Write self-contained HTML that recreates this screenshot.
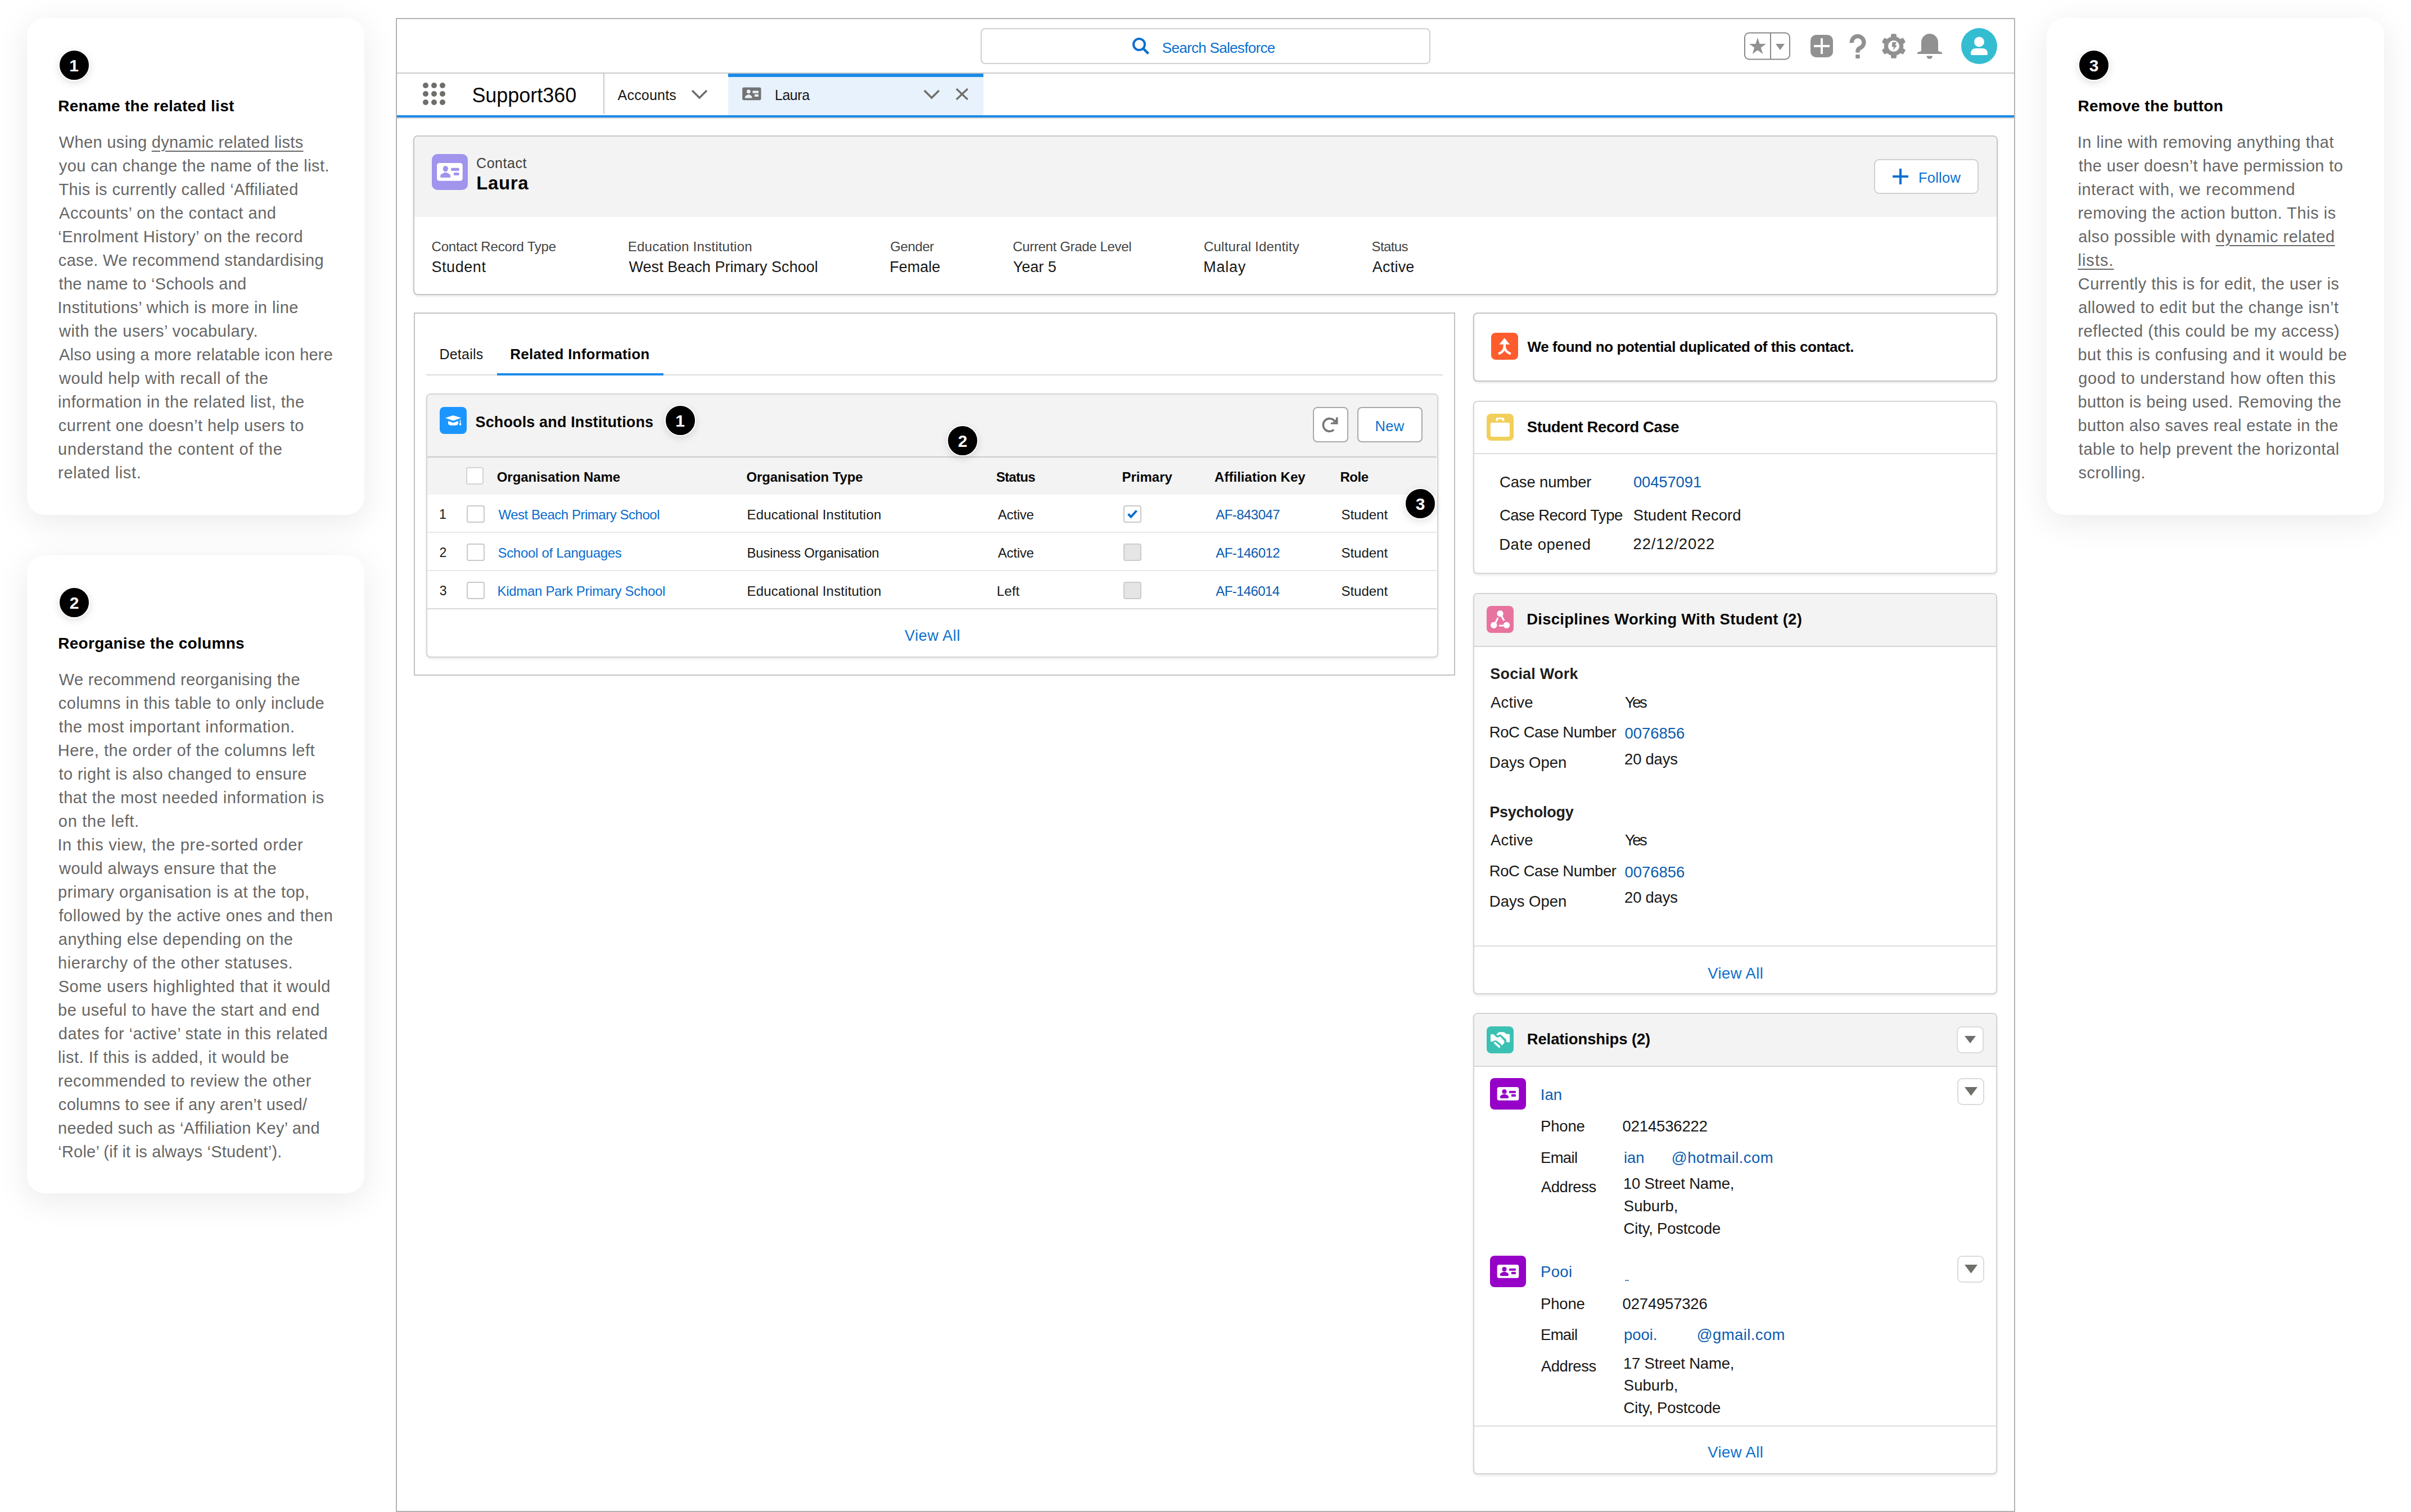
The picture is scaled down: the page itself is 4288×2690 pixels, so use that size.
<!DOCTYPE html><html><head><meta charset="utf-8"><style>
html,body{margin:0;padding:0;background:#ffffff;}
body{width:4288px;height:2690px;position:relative;overflow:hidden;font-family:"Liberation Sans",sans-serif;}
.a{position:absolute;box-sizing:border-box;}
.t{position:absolute;white-space:pre;}
.ul{text-decoration:underline;text-decoration-thickness:1.6px;text-underline-offset:5px;}
</style></head><body>
<div class="a" style="left:48.00px;top:32.00px;width:600.00px;height:884.00px;background:#fff;border-radius:32px;box-shadow:0 12px 60px rgba(0,0,0,0.085);"></div>
<div class="a" style="left:104.00px;top:88.00px;width:56.00px;height:56.00px;background:#000;border:2px solid #fff;border-radius:50%;box-shadow:0 4px 14px rgba(0,0,0,0.12);"></div>
<div class="t" style="left:123.15px;top:102.04px;font-size:30.00px;line-height:30.00px;color:#fff;font-weight:700;">1</div>
<div class="t" style="left:103.18px;top:175.46px;font-size:28.00px;line-height:28.00px;color:#000;font-weight:700;letter-spacing:0.3px;">Rename the related list</div>
<div class="t" style="left:104.86px;top:238.65px;font-size:29.00px;line-height:29.00px;color:#666666;letter-spacing:0.335px;">When using <span class="ul">dynamic related lists</span></div>
<div class="t" style="left:104.86px;top:280.65px;font-size:29.00px;line-height:29.00px;color:#666666;letter-spacing:0.422px;">you can change the name of the list.</div>
<div class="t" style="left:104.42px;top:322.65px;font-size:29.00px;line-height:29.00px;color:#666666;letter-spacing:0.394px;">This is currently called ‘Affiliated</div>
<div class="t" style="left:105.00px;top:364.65px;font-size:29.00px;line-height:29.00px;color:#666666;letter-spacing:0.542px;">Accounts’ on the contact and</div>
<div class="t" style="left:103.26px;top:406.65px;font-size:29.00px;line-height:29.00px;color:#666666;letter-spacing:0.441px;">‘Enrolment History’ on the record</div>
<div class="t" style="left:103.84px;top:448.65px;font-size:29.00px;line-height:29.00px;color:#666666;letter-spacing:0.314px;">case. We recommend standardising</div>
<div class="t" style="left:104.56px;top:490.65px;font-size:29.00px;line-height:29.00px;color:#666666;letter-spacing:0.276px;">the name to ‘Schools and</div>
<div class="t" style="left:102.39px;top:532.65px;font-size:29.00px;line-height:29.00px;color:#666666;letter-spacing:0.436px;">Institutions’ which is more in line</div>
<div class="t" style="left:105.00px;top:574.65px;font-size:29.00px;line-height:29.00px;color:#666666;letter-spacing:0.576px;">with the users’ vocabulary.</div>
<div class="t" style="left:105.00px;top:616.65px;font-size:29.00px;line-height:29.00px;color:#666666;letter-spacing:0.225px;">Also using a more relatable icon here</div>
<div class="t" style="left:105.00px;top:658.65px;font-size:29.00px;line-height:29.00px;color:#666666;letter-spacing:0.562px;">would help with recall of the</div>
<div class="t" style="left:103.11px;top:700.65px;font-size:29.00px;line-height:29.00px;color:#666666;letter-spacing:0.541px;">information in the related list, the</div>
<div class="t" style="left:103.84px;top:742.65px;font-size:29.00px;line-height:29.00px;color:#666666;letter-spacing:0.442px;">current one doesn’t help users to</div>
<div class="t" style="left:103.11px;top:784.65px;font-size:29.00px;line-height:29.00px;color:#666666;letter-spacing:0.768px;">understand the content of the</div>
<div class="t" style="left:103.11px;top:826.65px;font-size:29.00px;line-height:29.00px;color:#666666;letter-spacing:0.615px;">related list.</div>
<div class="a" style="left:48.00px;top:988.00px;width:600.00px;height:1135.00px;background:#fff;border-radius:32px;box-shadow:0 12px 60px rgba(0,0,0,0.085);"></div>
<div class="a" style="left:104.00px;top:1044.00px;width:56.00px;height:56.00px;background:#000;border:2px solid #fff;border-radius:50%;box-shadow:0 4px 14px rgba(0,0,0,0.12);"></div>
<div class="t" style="left:123.75px;top:1058.04px;font-size:30.00px;line-height:30.00px;color:#fff;font-weight:700;">2</div>
<div class="t" style="left:103.18px;top:1131.46px;font-size:28.00px;line-height:28.00px;color:#000;font-weight:700;letter-spacing:0.3px;">Reorganise the columns</div>
<div class="t" style="left:104.86px;top:1194.65px;font-size:29.00px;line-height:29.00px;color:#666666;letter-spacing:0.305px;">We recommend reorganising the</div>
<div class="t" style="left:103.84px;top:1236.65px;font-size:29.00px;line-height:29.00px;color:#666666;letter-spacing:0.461px;">columns in this table to only include</div>
<div class="t" style="left:104.56px;top:1278.65px;font-size:29.00px;line-height:29.00px;color:#666666;letter-spacing:0.661px;">the most important information.</div>
<div class="t" style="left:102.68px;top:1320.65px;font-size:29.00px;line-height:29.00px;color:#666666;letter-spacing:0.545px;">Here, the order of the columns left</div>
<div class="t" style="left:104.56px;top:1362.65px;font-size:29.00px;line-height:29.00px;color:#666666;letter-spacing:0.414px;">to right is also changed to ensure</div>
<div class="t" style="left:104.56px;top:1404.65px;font-size:29.00px;line-height:29.00px;color:#666666;letter-spacing:0.552px;">that the most needed information is</div>
<div class="t" style="left:103.84px;top:1446.65px;font-size:29.00px;line-height:29.00px;color:#666666;letter-spacing:0.717px;">on the left.</div>
<div class="t" style="left:102.39px;top:1488.65px;font-size:29.00px;line-height:29.00px;color:#666666;letter-spacing:0.670px;">In this view, the pre-sorted order</div>
<div class="t" style="left:105.00px;top:1530.65px;font-size:29.00px;line-height:29.00px;color:#666666;letter-spacing:0.465px;">would always ensure that the</div>
<div class="t" style="left:103.11px;top:1572.65px;font-size:29.00px;line-height:29.00px;color:#666666;letter-spacing:0.535px;">primary organisation is at the top,</div>
<div class="t" style="left:104.56px;top:1614.65px;font-size:29.00px;line-height:29.00px;color:#666666;letter-spacing:0.518px;">followed by the active ones and then</div>
<div class="t" style="left:103.84px;top:1656.65px;font-size:29.00px;line-height:29.00px;color:#666666;letter-spacing:0.482px;">anything else depending on the</div>
<div class="t" style="left:102.97px;top:1698.65px;font-size:29.00px;line-height:29.00px;color:#666666;letter-spacing:0.630px;">hierarchy of the other statuses.</div>
<div class="t" style="left:103.69px;top:1740.65px;font-size:29.00px;line-height:29.00px;color:#666666;letter-spacing:0.509px;">Some users highlighted that it would</div>
<div class="t" style="left:103.11px;top:1782.65px;font-size:29.00px;line-height:29.00px;color:#666666;letter-spacing:0.552px;">be useful to have the start and end</div>
<div class="t" style="left:103.84px;top:1824.65px;font-size:29.00px;line-height:29.00px;color:#666666;letter-spacing:0.485px;">dates for ‘active’ state in this related</div>
<div class="t" style="left:103.11px;top:1866.65px;font-size:29.00px;line-height:29.00px;color:#666666;letter-spacing:0.513px;">list. If this is added, it would be</div>
<div class="t" style="left:103.11px;top:1908.65px;font-size:29.00px;line-height:29.00px;color:#666666;letter-spacing:0.609px;">recommended to review the other</div>
<div class="t" style="left:103.84px;top:1950.65px;font-size:29.00px;line-height:29.00px;color:#666666;letter-spacing:0.308px;">columns to see if any aren’t used/</div>
<div class="t" style="left:103.11px;top:1992.65px;font-size:29.00px;line-height:29.00px;color:#666666;letter-spacing:0.263px;">needed such as ‘Affiliation Key’ and</div>
<div class="t" style="left:103.26px;top:2034.65px;font-size:29.00px;line-height:29.00px;color:#666666;letter-spacing:0.224px;">‘Role’ (if it is always ‘Student’).</div>
<div class="a" style="left:3640.00px;top:32.00px;width:600.00px;height:884.00px;background:#fff;border-radius:32px;box-shadow:0 12px 60px rgba(0,0,0,0.085);"></div>
<div class="a" style="left:3696.00px;top:88.00px;width:56.00px;height:56.00px;background:#000;border:2px solid #fff;border-radius:50%;box-shadow:0 4px 14px rgba(0,0,0,0.12);"></div>
<div class="t" style="left:3715.82px;top:102.04px;font-size:30.00px;line-height:30.00px;color:#fff;font-weight:700;">3</div>
<div class="t" style="left:3695.48px;top:175.46px;font-size:28.00px;line-height:28.00px;color:#000;font-weight:700;letter-spacing:0.3px;">Remove the button</div>
<div class="t" style="left:3694.69px;top:238.65px;font-size:29.00px;line-height:29.00px;color:#666666;letter-spacing:0.512px;">In line with removing anything that</div>
<div class="t" style="left:3696.87px;top:280.65px;font-size:29.00px;line-height:29.00px;color:#666666;letter-spacing:0.357px;">the user doesn’t have permission to</div>
<div class="t" style="left:3695.41px;top:322.65px;font-size:29.00px;line-height:29.00px;color:#666666;letter-spacing:0.656px;">interact with, we recommend</div>
<div class="t" style="left:3695.41px;top:364.65px;font-size:29.00px;line-height:29.00px;color:#666666;letter-spacing:0.521px;">removing the action button. This is</div>
<div class="t" style="left:3696.14px;top:406.65px;font-size:29.00px;line-height:29.00px;color:#666666;letter-spacing:0.484px;">also possible with <span class="ul">dynamic related</span></div>
<div class="t" style="left:3695.41px;top:448.65px;font-size:29.00px;line-height:29.00px;color:#666666;letter-spacing:1.028px;"><span class="ul">lists.</span></div>
<div class="t" style="left:3695.85px;top:490.65px;font-size:29.00px;line-height:29.00px;color:#666666;letter-spacing:0.469px;">Currently this is for edit, the user is</div>
<div class="t" style="left:3696.14px;top:532.65px;font-size:29.00px;line-height:29.00px;color:#666666;letter-spacing:0.513px;">allowed to edit but the change isn’t</div>
<div class="t" style="left:3695.41px;top:574.65px;font-size:29.00px;line-height:29.00px;color:#666666;letter-spacing:0.553px;">reflected (this could be my access)</div>
<div class="t" style="left:3695.41px;top:616.65px;font-size:29.00px;line-height:29.00px;color:#666666;letter-spacing:0.576px;">but this is confusing and it would be</div>
<div class="t" style="left:3696.14px;top:658.65px;font-size:29.00px;line-height:29.00px;color:#666666;letter-spacing:0.653px;">good to understand how often this</div>
<div class="t" style="left:3695.41px;top:700.65px;font-size:29.00px;line-height:29.00px;color:#666666;letter-spacing:0.416px;">button is being used. Removing the</div>
<div class="t" style="left:3695.41px;top:742.65px;font-size:29.00px;line-height:29.00px;color:#666666;letter-spacing:0.423px;">button also saves real estate in the</div>
<div class="t" style="left:3696.87px;top:784.65px;font-size:29.00px;line-height:29.00px;color:#666666;letter-spacing:0.527px;">table to help prevent the horizontal</div>
<div class="t" style="left:3696.43px;top:826.65px;font-size:29.00px;line-height:29.00px;color:#666666;letter-spacing:0.531px;">scrolling.</div>
<div class="a" style="left:704.00px;top:32.00px;width:2880.00px;height:2658.00px;border:2px solid #b3b3b3;background:#fff;"></div>
<div class="a" style="left:706.00px;top:129.00px;width:2876.00px;height:2.00px;background:#c8c8c8;"></div>
<div class="a" style="left:1744.00px;top:50.00px;width:800.00px;height:64.00px;border:2px solid #d0d0d0;border-radius:8px;background:#fff;"></div>
<svg class="a" style="left:2012.00px;top:65.00px" width="34" height="34" viewBox="0 0 34 34"><circle cx="14" cy="14" r="10" fill="none" stroke="#0b6fce" stroke-width="4"/><line x1="21.5" y1="21.5" x2="30.5" y2="30.5" stroke="#0b6fce" stroke-width="4.5" stroke-linecap="butt"/></svg>
<div class="t" style="left:2066.83px;top:71.59px;font-size:26.00px;line-height:26.00px;color:#0b6fce;letter-spacing:-0.693px;">Search Salesforce</div>
<svg class="a" style="left:3101.00px;top:57.00px" width="84" height="50" viewBox="0 0 84 50"><rect x="2" y="1.5" width="80" height="47" rx="8" fill="#fff" stroke="#888" stroke-width="2"/><line x1="48" y1="1.5" x2="48" y2="48.5" stroke="#888" stroke-width="2"/><polygon points="25,10 28.6,21 40,21 30.8,27.8 34.3,39 25,32.2 15.7,39 19.2,27.8 10,21 21.4,21" fill="#919191"/><polygon points="57,21 73,21 65,32" fill="#919191"/></svg>
<svg class="a" style="left:3220.00px;top:62.00px" width="40" height="40" viewBox="0 0 40 40"><rect x="0" y="0" width="40" height="40" rx="10" fill="#919191"/><rect x="18" y="6" width="4" height="28" fill="#fff"/><rect x="6" y="18" width="28" height="4" fill="#fff"/></svg>
<svg class="a" style="left:3286.00px;top:58.00px" width="36" height="48" viewBox="0 0 36 48"><path d="M7.3 18.2 A10.8 10.8 0 1 1 22.2 27.3 Q18 29.3 18 33 L18 35.5" fill="none" stroke="#919191" stroke-width="7.4"/><rect x="14.2" y="39" width="7.6" height="7" rx="1" fill="#919191"/></svg>
<svg class="a" style="left:3346.00px;top:60.00px" width="44" height="44" viewBox="0 0 44 44"><polygon points="14.10,8.32 18.18,6.67 18.78,1.65 25.22,1.65 25.82,6.67 29.90,8.32 33.37,11.02 38.01,9.04 41.23,14.62 37.19,17.64 37.80,22.00 37.19,26.36 41.23,29.38 38.01,34.96 33.37,32.98 29.90,35.68 25.82,37.33 25.22,42.35 18.78,42.35 18.18,37.33 14.10,35.68 10.63,32.98 5.99,34.96 2.77,29.38 6.81,26.36 6.20,22.00 6.81,17.64 2.77,14.62 5.99,9.04 10.63,11.02" fill="#919191" stroke="#919191" stroke-width="3" stroke-linejoin="round"/><circle cx="22" cy="22" r="10" fill="#fff"/><polygon points="19.5,15 27,15 24.5,20.5 28,20.5 20.5,30 22.5,23.5 18.5,23.5" fill="#919191"/></svg>
<svg class="a" style="left:3409.00px;top:59.70px" width="46" height="46" viewBox="0 0 46 46"><path d="M8 29 L8 15 A15 15 0 0 1 38 15 L38 29 Q38 32 41 32 Q45 32 45 35 L45 36 L1 36 L1 35 Q1 32 5 32 Q8 32 8 29 Z" fill="#919191"/><path d="M17.5 39.5 L28 39.5 A5.25 5.25 0 0 1 17.5 39.5 Z" fill="#919191"/></svg>
<svg class="a" style="left:3488.00px;top:50.00px" width="64" height="64" viewBox="0 0 64 64"><circle cx="32" cy="32" r="32" fill="#34bdd0"/><circle cx="32" cy="24.5" r="9" fill="#fff"/><path d="M17 46 Q17 36 26 36 L38 36 Q47 36 47 46 Q47 48 45 48 L19 48 Q17 48 17 46 Z" fill="#fff"/></svg>
<div class="a" style="left:752.00px;top:147.00px;width:10.00px;height:10.00px;background:#706e6b;border-radius:50%;"></div>
<div class="a" style="left:767.00px;top:147.00px;width:10.00px;height:10.00px;background:#706e6b;border-radius:50%;"></div>
<div class="a" style="left:782.00px;top:147.00px;width:10.00px;height:10.00px;background:#706e6b;border-radius:50%;"></div>
<div class="a" style="left:752.00px;top:162.00px;width:10.00px;height:10.00px;background:#706e6b;border-radius:50%;"></div>
<div class="a" style="left:767.00px;top:162.00px;width:10.00px;height:10.00px;background:#706e6b;border-radius:50%;"></div>
<div class="a" style="left:782.00px;top:162.00px;width:10.00px;height:10.00px;background:#706e6b;border-radius:50%;"></div>
<div class="a" style="left:752.00px;top:177.00px;width:10.00px;height:10.00px;background:#706e6b;border-radius:50%;"></div>
<div class="a" style="left:767.00px;top:177.00px;width:10.00px;height:10.00px;background:#706e6b;border-radius:50%;"></div>
<div class="a" style="left:782.00px;top:177.00px;width:10.00px;height:10.00px;background:#706e6b;border-radius:50%;"></div>
<div class="t" style="left:839.38px;top:152.47px;font-size:36.00px;line-height:36.00px;color:#080707;letter-spacing:-0.027px;">Support360</div>
<div class="a" style="left:1073.00px;top:131.00px;width:2.00px;height:72.00px;background:#c9c9c9;"></div>
<div class="t" style="left:1098.60px;top:156.90px;font-size:25.00px;line-height:25.00px;color:#181818;letter-spacing:0.200px;">Accounts</div>
<svg class="a" style="left:1228.00px;top:157.00px" width="32" height="22" viewBox="0 0 32 22"><polyline points="3,4 16,17 29,4" fill="none" stroke="#706e6b" stroke-width="3.5"/></svg>
<div class="a" style="left:1295.00px;top:131.00px;width:454.00px;height:74.00px;background:#e8f2fc;"></div>
<div class="a" style="left:1295.00px;top:131.00px;width:454.00px;height:6.00px;background:#1b8ae8;"></div>
<svg class="a" style="left:1320.00px;top:154.50px" width="34" height="24" viewBox="0 0 34 24"><rect x="0.2" y="0.4" width="33.4" height="22.9" rx="3" fill="#737373"/><circle cx="11.4" cy="7.8" r="3.4" fill="#e8f2fc"/><path d="M4.7 19.5 Q4.7 15.5 8.5 14.3 L10 13.3 L12.8 13.3 L14.3 14.3 Q17.8 15.5 17.8 19.5 Z" fill="#e8f2fc"/><rect x="18.5" y="6.4" width="10.6" height="4.4" rx="0.8" fill="#e8f2fc"/><rect x="21.9" y="12.8" width="7.2" height="4.3" rx="0.8" fill="#e8f2fc"/></svg>
<div class="t" style="left:1378.00px;top:156.70px;font-size:25.00px;line-height:25.00px;color:#181818;letter-spacing:-0.469px;">Laura</div>
<svg class="a" style="left:1641.00px;top:157.00px" width="32" height="22" viewBox="0 0 32 22"><polyline points="3,4 16,17 29,4" fill="none" stroke="#706e6b" stroke-width="3.5"/></svg>
<svg class="a" style="left:1698.00px;top:155.00px" width="26" height="25" viewBox="0 0 26 25"><line x1="3" y1="3" x2="23" y2="22" stroke="#706e6b" stroke-width="3.2"/><line x1="23" y1="3" x2="3" y2="22" stroke="#706e6b" stroke-width="3.2"/></svg>
<div class="a" style="left:706.00px;top:205.00px;width:2876.00px;height:4.00px;background:#1b8ae8;"></div>
<div class="a" style="left:706.00px;top:209.00px;width:2876.00px;height:2.00px;background:#d5d5d5;"></div>
<div class="a" style="left:735.00px;top:241.00px;width:2818.00px;height:284.00px;border:2px solid #c6c6c6;border-radius:8px;background:#fff;box-shadow:0 2px 4px rgba(0,0,0,0.10);"></div>
<div class="a" style="left:737.00px;top:243.00px;width:2814.00px;height:143.00px;background:#f3f3f3;border-radius:6px 6px 0 0;"></div>
<svg class="a" style="left:768.00px;top:274.00px" width="64" height="64" viewBox="0 0 64 64"><rect width="64" height="64" rx="10" fill="#a094ed"/><rect x="9.1" y="16" width="45.7" height="31.7" rx="4.3" fill="#fff"/><ellipse cx="24.3" cy="26.2" rx="4.6" ry="5.2" fill="#a094ed"/><path d="M15 40 Q15 35.8 20 34.3 L22.3 33 L26.3 33 L28.6 34.3 Q33.4 35.8 33.4 40 Q33.4 42 31.4 42 L17 42 Q15 42 15 40 Z" fill="#a094ed"/><rect x="34.1" y="24.8" width="14.5" height="5.2" rx="1.5" fill="#a094ed"/><rect x="38.9" y="32.9" width="9.7" height="5.2" rx="1.5" fill="#a094ed"/></svg>
<div class="t" style="left:847.05px;top:277.90px;font-size:25.00px;line-height:25.00px;color:#3e3e3c;letter-spacing:0.542px;">Contact</div>
<div class="t" style="left:847.15px;top:309.20px;font-size:33.00px;line-height:33.00px;color:#080707;font-weight:700;letter-spacing:0.639px;">Laura</div>
<div class="a" style="left:3333.00px;top:283.00px;width:186.00px;height:62.00px;border:2px solid #d0d0d0;border-radius:9px;background:#fff;"></div>
<svg class="a" style="left:3366.00px;top:300.00px" width="28" height="28" viewBox="0 0 28 28"><rect x="12" y="0" width="4" height="28" fill="#0b6fce"/><rect x="0" y="12" width="28" height="4" fill="#0b6fce"/></svg>
<div class="t" style="left:3411.96px;top:303.59px;font-size:25.50px;line-height:25.50px;color:#0b6fce;letter-spacing:0.244px;">Follow</div>
<div class="t" style="left:767.50px;top:427.01px;font-size:24.00px;line-height:24.00px;color:#444444;letter-spacing:-0.190px;">Contact Record Type</div>
<div class="t" style="left:767.49px;top:462.38px;font-size:27.00px;line-height:27.00px;color:#181818;letter-spacing:0.556px;">Student</div>
<div class="t" style="left:1116.78px;top:427.01px;font-size:24.00px;line-height:24.00px;color:#444444;letter-spacing:0.233px;">Education Institution</div>
<div class="t" style="left:1118.57px;top:462.38px;font-size:27.00px;line-height:27.00px;color:#181818;letter-spacing:0.024px;">West Beach Primary School</div>
<div class="t" style="left:1583.20px;top:427.01px;font-size:24.00px;line-height:24.00px;color:#444444;letter-spacing:-0.376px;">Gender</div>
<div class="t" style="left:1582.24px;top:462.38px;font-size:27.00px;line-height:27.00px;color:#181818;letter-spacing:-0.014px;">Female</div>
<div class="t" style="left:1801.30px;top:427.01px;font-size:24.00px;line-height:24.00px;color:#444444;letter-spacing:-0.343px;">Current Grade Level</div>
<div class="t" style="left:1801.83px;top:462.38px;font-size:27.00px;line-height:27.00px;color:#181818;letter-spacing:-0.026px;">Year 5</div>
<div class="t" style="left:2141.10px;top:427.01px;font-size:24.00px;line-height:24.00px;color:#444444;letter-spacing:0.175px;">Cultural Identity</div>
<div class="t" style="left:2140.14px;top:462.38px;font-size:27.00px;line-height:27.00px;color:#181818;letter-spacing:0.767px;">Malay</div>
<div class="t" style="left:2439.62px;top:427.01px;font-size:24.00px;line-height:24.00px;color:#444444;letter-spacing:-0.624px;">Status</div>
<div class="t" style="left:2440.70px;top:462.38px;font-size:27.00px;line-height:27.00px;color:#181818;letter-spacing:0.235px;">Active</div>
<div class="a" style="left:736.00px;top:556.00px;width:1852.00px;height:646.00px;border:2px solid #c4c3c0;background:#fff;"></div>
<div class="t" style="left:781.40px;top:618.00px;font-size:25.00px;line-height:25.00px;color:#181818;letter-spacing:0.250px;">Details</div>
<div class="t" style="left:907.31px;top:617.19px;font-size:26.00px;line-height:26.00px;color:#080707;font-weight:700;letter-spacing:0.212px;">Related Information</div>
<div class="a" style="left:758.00px;top:666.00px;width:1808.00px;height:2.00px;background:#dcdcdc;"></div>
<div class="a" style="left:883.70px;top:664.00px;width:296.30px;height:4.00px;background:#1b8ae8;"></div>
<div class="a" style="left:758.00px;top:700.00px;width:1799.50px;height:470.00px;border:2px solid #d6d4d2;border-radius:8px;background:#fff;box-shadow:0 2px 4px rgba(0,0,0,0.10);"></div>
<div class="a" style="left:760.00px;top:702.00px;width:1795.50px;height:110.00px;background:#f3f3f3;border-radius:6px 6px 0 0;"></div>
<div class="a" style="left:760.00px;top:812.00px;width:1795.00px;height:2.00px;background:#c9c9c9;"></div>
<div class="a" style="left:760.00px;top:814.00px;width:1795.00px;height:66.00px;background:#f3f3f3;"></div>
<svg class="a" style="left:782.00px;top:724.00px" width="48" height="48" viewBox="0 0 48 48"><rect width="48" height="48" rx="8" fill="#1b96ff"/><polygon points="9.8,19.6 24.1,15 38.3,19.6 24.1,24.4" fill="#fff"/><path d="M15 25 L24.1 28.3 L32.9 25 L32.9 29.5 Q32.9 33.1 24.1 33.1 Q15 33.1 15 29.5 Z" fill="#fff"/><rect x="35.9" y="23" width="1.4" height="6" fill="#fff"/><ellipse cx="36.6" cy="30.8" rx="1.8" ry="2.2" fill="#fff"/></svg>
<div class="t" style="left:845.49px;top:738.28px;font-size:27.00px;line-height:27.00px;color:#080707;font-weight:700;letter-spacing:0.136px;">Schools and Institutions</div>
<div class="a" style="left:2334.50px;top:724.40px;width:63.00px;height:62.60px;border:2px solid #a8a8a8;border-radius:8px;background:#fff;"></div>
<svg class="a" style="left:2340.00px;top:730.00px" width="52" height="52" viewBox="0 0 52 52"><path d="M33.4 18.6 A11.4 11.4 0 1 0 32.2 34.7" fill="none" stroke="#757575" stroke-width="3.6"/><polygon points="36,12.4 39.5,12.4 39.5,24.8 26.8,24.8 26.8,21.7 36,21.7" fill="#757575"/><polygon points="36,16 36,21.7 30,21.7" fill="#757575"/></svg>
<div class="a" style="left:2414.00px;top:724.40px;width:115.50px;height:62.60px;border:2px solid #a8a8a8;border-radius:8px;background:#fff;"></div>
<div class="t" style="left:2445.56px;top:745.99px;font-size:25.50px;line-height:25.50px;color:#0b6fce;letter-spacing:0.256px;">New</div>
<div class="a" style="left:829.00px;top:831.00px;width:31.00px;height:31.00px;border:2px solid #d4d4d4;border-radius:4px;background:#fff;"></div>
<div class="t" style="left:883.74px;top:836.51px;font-size:24.00px;line-height:24.00px;color:#080707;font-weight:700;letter-spacing:-0.036px;">Organisation Name</div>
<div class="t" style="left:1327.54px;top:836.51px;font-size:24.00px;line-height:24.00px;color:#080707;font-weight:700;letter-spacing:-0.120px;">Organisation Type</div>
<div class="t" style="left:1771.68px;top:836.51px;font-size:24.00px;line-height:24.00px;color:#080707;font-weight:700;letter-spacing:-0.688px;">Status</div>
<div class="t" style="left:1995.44px;top:836.51px;font-size:24.00px;line-height:24.00px;color:#080707;font-weight:700;letter-spacing:0.013px;">Primary</div>
<div class="t" style="left:2160.10px;top:836.51px;font-size:24.00px;line-height:24.00px;color:#080707;font-weight:700;letter-spacing:0.017px;">Affiliation Key</div>
<div class="t" style="left:2383.44px;top:836.51px;font-size:24.00px;line-height:24.00px;color:#080707;font-weight:700;letter-spacing:-0.453px;">Role</div>
<div class="t" style="left:780.88px;top:903.52px;font-size:23.00px;line-height:23.00px;color:#181818;">1</div>
<div class="a" style="left:830.00px;top:898.50px;width:32.00px;height:31.50px;border:2px solid #c9c9c9;border-radius:4px;background:#fff;"></div>
<div class="t" style="left:886.38px;top:904.21px;font-size:24.00px;line-height:24.00px;color:#0a6ccf;letter-spacing:-0.464px;">West Beach Primary School</div>
<div class="t" style="left:1328.58px;top:904.21px;font-size:24.00px;line-height:24.00px;color:#181818;letter-spacing:0.175px;">Educational Institution</div>
<div class="t" style="left:1774.70px;top:904.21px;font-size:24.00px;line-height:24.00px;color:#181818;letter-spacing:-0.240px;">Active</div>
<div class="a" style="left:1998.00px;top:898.50px;width:32.00px;height:31.50px;border:2px solid #c9c9c9;border-radius:4px;background:#fff;"></div>
<svg class="a" style="left:2004.00px;top:905.00px" width="20" height="18" viewBox="0 0 20 18"><polyline points="2.5,9.5 7.5,14.5 17.5,3.5" fill="none" stroke="#0b6fce" stroke-width="4"/></svg>
<div class="t" style="left:2162.30px;top:904.21px;font-size:24.00px;line-height:24.00px;color:#0b5cb0;letter-spacing:-0.560px;">AF-843047</div>
<div class="t" style="left:2385.42px;top:904.21px;font-size:24.00px;line-height:24.00px;color:#181818;letter-spacing:-0.013px;">Student</div>
<div class="a" style="left:760.00px;top:946.00px;width:1795.00px;height:2.00px;background:#e8e8e8;"></div>
<div class="t" style="left:781.45px;top:971.52px;font-size:23.00px;line-height:23.00px;color:#181818;">2</div>
<div class="a" style="left:830.00px;top:966.50px;width:32.00px;height:31.50px;border:2px solid #c9c9c9;border-radius:4px;background:#fff;"></div>
<div class="t" style="left:885.42px;top:972.21px;font-size:24.00px;line-height:24.00px;color:#0a6ccf;letter-spacing:-0.281px;">School of Languages</div>
<div class="t" style="left:1328.58px;top:972.21px;font-size:24.00px;line-height:24.00px;color:#181818;letter-spacing:-0.257px;">Business Organisation</div>
<div class="t" style="left:1774.70px;top:972.21px;font-size:24.00px;line-height:24.00px;color:#181818;letter-spacing:-0.240px;">Active</div>
<div class="a" style="left:1998.00px;top:966.50px;width:32.00px;height:31.50px;border:2px solid #cccccc;border-radius:4px;background:#e5e5e5;"></div>
<div class="t" style="left:2162.30px;top:972.21px;font-size:24.00px;line-height:24.00px;color:#0b5cb0;letter-spacing:-0.560px;">AF-146012</div>
<div class="t" style="left:2385.42px;top:972.21px;font-size:24.00px;line-height:24.00px;color:#181818;letter-spacing:-0.013px;">Student</div>
<div class="a" style="left:760.00px;top:1014.00px;width:1795.00px;height:2.00px;background:#e8e8e8;"></div>
<div class="t" style="left:781.68px;top:1039.52px;font-size:23.00px;line-height:23.00px;color:#181818;">3</div>
<div class="a" style="left:830.00px;top:1034.50px;width:32.00px;height:31.50px;border:2px solid #c9c9c9;border-radius:4px;background:#fff;"></div>
<div class="t" style="left:884.58px;top:1040.21px;font-size:24.00px;line-height:24.00px;color:#0a6ccf;letter-spacing:-0.318px;">Kidman Park Primary School</div>
<div class="t" style="left:1328.58px;top:1040.21px;font-size:24.00px;line-height:24.00px;color:#181818;letter-spacing:0.175px;">Educational Institution</div>
<div class="t" style="left:1772.78px;top:1040.21px;font-size:24.00px;line-height:24.00px;color:#181818;letter-spacing:0.127px;">Left</div>
<div class="a" style="left:1998.00px;top:1034.50px;width:32.00px;height:31.50px;border:2px solid #cccccc;border-radius:4px;background:#e5e5e5;"></div>
<div class="t" style="left:2162.30px;top:1040.21px;font-size:24.00px;line-height:24.00px;color:#0b5cb0;letter-spacing:-0.620px;">AF-146014</div>
<div class="t" style="left:2385.42px;top:1040.21px;font-size:24.00px;line-height:24.00px;color:#181818;letter-spacing:-0.013px;">Student</div>
<div class="a" style="left:760.00px;top:1082.00px;width:1795.00px;height:2.00px;background:#d8d8d8;"></div>
<div class="t" style="left:1609.07px;top:1117.78px;font-size:27.00px;line-height:27.00px;color:#0b6fce;letter-spacing:0.619px;">View All</div>
<div class="a" style="left:1182.00px;top:720.00px;width:56.00px;height:56.00px;background:#000;border:2px solid #fff;border-radius:50%;box-shadow:0 4px 14px rgba(0,0,0,0.12);"></div>
<div class="t" style="left:1201.15px;top:734.04px;font-size:30.00px;line-height:30.00px;color:#fff;font-weight:700;">1</div>
<div class="a" style="left:1684.00px;top:756.00px;width:56.00px;height:56.00px;background:#000;border:2px solid #fff;border-radius:50%;box-shadow:0 4px 14px rgba(0,0,0,0.12);"></div>
<div class="t" style="left:1703.75px;top:770.04px;font-size:30.00px;line-height:30.00px;color:#fff;font-weight:700;">2</div>
<div class="a" style="left:2498.00px;top:868.00px;width:56.00px;height:56.00px;background:#000;border:2px solid #fff;border-radius:50%;box-shadow:0 4px 14px rgba(0,0,0,0.12);"></div>
<div class="t" style="left:2517.82px;top:882.04px;font-size:30.00px;line-height:30.00px;color:#fff;font-weight:700;">3</div>
<div class="a" style="left:2620.00px;top:556.00px;width:932.00px;height:123.00px;border:2px solid #c4c4c4;border-radius:8px;background:#fff;box-shadow:0 2px 4px rgba(0,0,0,0.10);"></div>
<svg class="a" style="left:2652.00px;top:592.00px" width="48" height="48" viewBox="0 0 48 48"><rect width="48" height="48" rx="8" fill="#fe5c2d"/><polygon points="23.7,9.3 33.1,20.7 14.4,20.7" fill="#fff"/><path d="M23.8 20 L23.8 23 C23.8 30 20.5 34.5 14.6 36.8 M23.8 23 C23.8 30 27.1 34.5 33.3 36.8" fill="none" stroke="#fff" stroke-width="4.2" stroke-linecap="round"/></svg>
<div class="t" style="left:2716.60px;top:604.39px;font-size:26.00px;line-height:26.00px;color:#080707;font-weight:700;letter-spacing:-0.435px;">We found no potential duplicated of this contact.</div>
<div class="a" style="left:2620.00px;top:712.50px;width:932.00px;height:308.50px;border:2px solid #d6d6d6;border-radius:8px;background:#fff;box-shadow:0 2px 4px rgba(0,0,0,0.10);"></div>
<svg class="a" style="left:2644.00px;top:736.00px" width="48" height="48" viewBox="0 0 48 48"><rect width="48" height="48" rx="8" fill="#f2cf5b"/><rect x="6.9" y="16.1" width="34.1" height="25" rx="3" fill="#fff"/><path d="M16.5 12.9 L16.5 9.5 Q16.5 6.9 19 6.9 L28.8 6.9 Q31.3 6.9 31.3 9.5 L31.3 12.9 L28 12.9 L28 10.1 L20 10.1 L20 12.9 Z" fill="#fff"/></svg>
<div class="t" style="left:2715.78px;top:746.17px;font-size:27.50px;line-height:27.50px;color:#080707;font-weight:700;letter-spacing:-0.402px;">Student Record Case</div>
<div class="a" style="left:2622.00px;top:806.00px;width:928.00px;height:2.00px;background:#dddddd;"></div>
<div class="t" style="left:2667.03px;top:843.97px;font-size:27.50px;line-height:27.50px;color:#181818;letter-spacing:-0.161px;">Case number</div>
<div class="t" style="left:2904.90px;top:843.97px;font-size:27.50px;line-height:27.50px;color:#0b5cb0;letter-spacing:-0.148px;">00457091</div>
<div class="t" style="left:2667.03px;top:902.67px;font-size:27.50px;line-height:27.50px;color:#181818;letter-spacing:-0.538px;">Case Record Type</div>
<div class="t" style="left:2904.76px;top:902.67px;font-size:27.50px;line-height:27.50px;color:#181818;letter-spacing:0.054px;">Student Record</div>
<div class="t" style="left:2666.20px;top:955.27px;font-size:27.50px;line-height:27.50px;color:#181818;letter-spacing:0.545px;">Date opened</div>
<div class="t" style="left:2904.62px;top:953.97px;font-size:27.50px;line-height:27.50px;color:#181818;letter-spacing:0.790px;">22/12/2022</div>
<div class="a" style="left:2620.00px;top:1054.50px;width:932.00px;height:714.50px;border:2px solid #d6d4d2;border-radius:8px;background:#fff;box-shadow:0 2px 4px rgba(0,0,0,0.10);"></div>
<div class="a" style="left:2622.00px;top:1056.50px;width:928.00px;height:92.00px;background:#f3f3f3;border-radius:6px 6px 0 0;"></div>
<div class="a" style="left:2622.00px;top:1148.50px;width:928.00px;height:2.00px;background:#d6d6d6;"></div>
<svg class="a" style="left:2644.00px;top:1078.00px" width="48" height="48" viewBox="0 0 48 48"><rect width="48" height="48" rx="8" fill="#e8739e"/><circle cx="24.1" cy="13.7" r="5.7" fill="#fff"/><circle cx="12.8" cy="34.2" r="5.7" fill="#fff"/><circle cx="35.5" cy="34.2" r="5.7" fill="#fff"/><line x1="26.3" y1="17.5" x2="31.2" y2="26.3" stroke="#fff" stroke-width="3"/><line x1="20.2" y1="21" x2="15.8" y2="30" stroke="#fff" stroke-width="3"/><line x1="22" y1="35.1" x2="30" y2="35.1" stroke="#fff" stroke-width="3"/></svg>
<div class="t" style="left:2715.21px;top:1088.17px;font-size:27.50px;line-height:27.50px;color:#080707;font-weight:700;letter-spacing:0.260px;">Disciplines Working With Student (2)</div>
<div class="t" style="left:2650.19px;top:1186.28px;font-size:27.00px;line-height:27.00px;color:#1e1e1e;font-weight:700;letter-spacing:0.228px;">Social Work</div>
<div class="t" style="left:2651.00px;top:1235.67px;font-size:27.50px;line-height:27.50px;color:#181818;letter-spacing:0.147px;">Active</div>
<div class="t" style="left:2889.81px;top:1235.67px;font-size:27.50px;line-height:27.50px;color:#181818;letter-spacing:-2.487px;">Yes</div>
<div class="t" style="left:2648.80px;top:1289.47px;font-size:27.50px;line-height:27.50px;color:#181818;letter-spacing:-0.438px;">RoC Case Number</div>
<div class="t" style="left:2889.40px;top:1290.97px;font-size:27.50px;line-height:27.50px;color:#0b5cb0;letter-spacing:-0.046px;">0076856</div>
<div class="t" style="left:2648.80px;top:1343.47px;font-size:27.50px;line-height:27.50px;color:#181818;">Days Open</div>
<div class="t" style="left:2889.12px;top:1337.17px;font-size:27.50px;line-height:27.50px;color:#181818;letter-spacing:-0.258px;">20 days</div>
<div class="t" style="left:2649.24px;top:1432.48px;font-size:27.00px;line-height:27.00px;color:#1e1e1e;font-weight:700;letter-spacing:-0.231px;">Psychology</div>
<div class="t" style="left:2651.00px;top:1481.17px;font-size:27.50px;line-height:27.50px;color:#181818;letter-spacing:0.147px;">Active</div>
<div class="t" style="left:2889.81px;top:1481.17px;font-size:27.50px;line-height:27.50px;color:#181818;letter-spacing:-2.487px;">Yes</div>
<div class="t" style="left:2648.80px;top:1536.27px;font-size:27.50px;line-height:27.50px;color:#181818;letter-spacing:-0.438px;">RoC Case Number</div>
<div class="t" style="left:2889.40px;top:1537.77px;font-size:27.50px;line-height:27.50px;color:#0b5cb0;letter-spacing:-0.046px;">0076856</div>
<div class="t" style="left:2648.80px;top:1589.97px;font-size:27.50px;line-height:27.50px;color:#181818;">Days Open</div>
<div class="t" style="left:2889.12px;top:1583.37px;font-size:27.50px;line-height:27.50px;color:#181818;letter-spacing:-0.258px;">20 days</div>
<div class="a" style="left:2622.00px;top:1682.00px;width:928.00px;height:2.00px;background:#dddddd;"></div>
<div class="t" style="left:3037.26px;top:1717.67px;font-size:27.50px;line-height:27.50px;color:#0b6fce;letter-spacing:0.404px;">View All</div>
<div class="a" style="left:2620.00px;top:1802.00px;width:932.00px;height:821.00px;border:2px solid #d6d4d2;border-radius:8px;background:#fff;box-shadow:0 2px 4px rgba(0,0,0,0.10);"></div>
<div class="a" style="left:2622.00px;top:1804.00px;width:928.00px;height:92.00px;background:#f3f3f3;border-radius:6px 6px 0 0;"></div>
<div class="a" style="left:2622.00px;top:1896.00px;width:928.00px;height:2.00px;background:#d6d6d6;"></div>
<svg class="a" style="left:2644.00px;top:1826.00px" width="48" height="48" viewBox="0 0 48 48"><rect width="48" height="48" rx="8" fill="#3bc1b4"/><path d="M17.2 14.3 L22 10.2 L30.9 10.2 L35 13.5 L41.1 13.9 L41.1 28.3 L35.4 28.3 L35 23.5 L24.6 14.3 L20.2 16.1 Q18.3 16.2 17.2 14.3 Z" fill="#fff"/><path d="M7 14.3 L12.9 14.3 L13.9 16.1 Q16.9 19.8 19.8 19.8 L24.3 17.9 L31.7 26.5 L31.3 29.4 L27.2 33.9 L25.7 31.7 L18.3 25.7 Q14.6 23.6 10.9 26.9 L7 26.9 Z" fill="#fff"/><line x1="14.9" y1="29.4" x2="22.5" y2="36.2" stroke="#fff" stroke-width="3.7" stroke-linecap="round"/></svg>
<div class="t" style="left:2715.71px;top:1835.47px;font-size:27.50px;line-height:27.50px;color:#080707;font-weight:700;letter-spacing:-0.124px;">Relationships (2)</div>
<div class="a" style="left:3480.00px;top:1826.00px;width:48.00px;height:48.00px;border:2px solid #dddbda;border-radius:9px;background:#fff;"></div>
<svg class="a" style="left:3494.00px;top:1843.00px" width="20" height="14" viewBox="0 0 20 14"><polygon points="0,0 20,0 10,13.2" fill="#706e6b"/></svg>
<svg class="a" style="left:2650.00px;top:1918.00px" width="64" height="56" viewBox="0 0 64 56"><rect width="64" height="56" rx="8" fill="#9602c7"/><rect x="12.7" y="16.1" width="38.6" height="23.7" rx="3.5" fill="#fff"/><circle cx="25.5" cy="24" r="4.1" fill="#9602c7"/><path d="M17.8 34.3 Q17.8 31 21.5 29.8 L23.5 28.8 L27.5 28.8 L29.5 29.8 Q33.1 31 33.1 34.3 Q33.1 36 31.4 36 L19.5 36 Q17.8 36 17.8 34.3 Z" fill="#9602c7"/><rect x="33.9" y="22.7" width="12.1" height="4" rx="1.2" fill="#9602c7"/><rect x="37.9" y="28.8" width="8.1" height="4.3" rx="1.2" fill="#9602c7"/></svg>
<div class="t" style="left:2739.72px;top:1933.77px;font-size:27.50px;line-height:27.50px;color:#0b5cb0;letter-spacing:0.019px;">Ian</div>
<div class="a" style="left:3480.50px;top:1918.00px;width:48.00px;height:48.00px;border:2px solid #dddbda;border-radius:9px;background:#fff;"></div>
<svg class="a" style="left:3493.50px;top:1934.00px" width="23" height="16" viewBox="0 0 23 16"><polygon points="0,0 23,0 11.5,15.5" fill="#706e6b"/></svg>
<div class="t" style="left:2740.00px;top:1989.57px;font-size:27.50px;line-height:27.50px;color:#181818;letter-spacing:-0.184px;">Phone</div>
<div class="t" style="left:2885.60px;top:1989.57px;font-size:27.50px;line-height:27.50px;color:#181818;letter-spacing:-0.169px;">0214536222</div>
<div class="t" style="left:2740.00px;top:2045.57px;font-size:27.50px;line-height:27.50px;color:#181818;letter-spacing:-0.691px;">Email</div>
<div class="t" style="left:2887.91px;top:2045.57px;font-size:27.50px;line-height:27.50px;color:#0b5cb0;">ian</div>
<div class="t" style="left:2972.80px;top:2045.57px;font-size:27.50px;line-height:27.50px;color:#0b5cb0;letter-spacing:0.428px;">@hotmail.com</div>
<div class="t" style="left:2740.80px;top:2097.67px;font-size:27.50px;line-height:27.50px;color:#181818;letter-spacing:-0.410px;">Address</div>
<div class="t" style="left:2886.94px;top:2092.07px;font-size:27.50px;line-height:27.50px;color:#181818;letter-spacing:-0.200px;">10 Street Name,</div>
<div class="t" style="left:2887.76px;top:2131.57px;font-size:27.50px;line-height:27.50px;color:#181818;letter-spacing:0.054px;">Suburb,</div>
<div class="t" style="left:2887.62px;top:2171.67px;font-size:27.50px;line-height:27.50px;color:#181818;letter-spacing:-0.197px;">City, Postcode</div>
<svg class="a" style="left:2650.00px;top:2234.30px" width="64" height="56" viewBox="0 0 64 56"><rect width="64" height="56" rx="8" fill="#9602c7"/><rect x="12.7" y="16.1" width="38.6" height="23.7" rx="3.5" fill="#fff"/><circle cx="25.5" cy="24" r="4.1" fill="#9602c7"/><path d="M17.8 34.3 Q17.8 31 21.5 29.8 L23.5 28.8 L27.5 28.8 L29.5 29.8 Q33.1 31 33.1 34.3 Q33.1 36 31.4 36 L19.5 36 Q17.8 36 17.8 34.3 Z" fill="#9602c7"/><rect x="33.9" y="22.7" width="12.1" height="4" rx="1.2" fill="#9602c7"/><rect x="37.9" y="28.8" width="8.1" height="4.3" rx="1.2" fill="#9602c7"/></svg>
<div class="t" style="left:2740.00px;top:2249.27px;font-size:27.50px;line-height:27.50px;color:#0b5cb0;letter-spacing:0.329px;">Pooi</div>
<div class="a" style="left:3480.50px;top:2234.30px;width:48.00px;height:48.00px;border:2px solid #dddbda;border-radius:9px;background:#fff;"></div>
<svg class="a" style="left:3493.50px;top:2250.30px" width="23" height="16" viewBox="0 0 23 16"><polygon points="0,0 23,0 11.5,15.5" fill="#706e6b"/></svg>
<div class="t" style="left:2740.00px;top:2305.87px;font-size:27.50px;line-height:27.50px;color:#181818;letter-spacing:-0.184px;">Phone</div>
<div class="t" style="left:2885.60px;top:2305.87px;font-size:27.50px;line-height:27.50px;color:#181818;letter-spacing:-0.200px;">0274957326</div>
<div class="t" style="left:2740.00px;top:2361.47px;font-size:27.50px;line-height:27.50px;color:#181818;letter-spacing:-0.691px;">Email</div>
<div class="t" style="left:2887.91px;top:2361.47px;font-size:27.50px;line-height:27.50px;color:#0b5cb0;">pooi.</div>
<div class="t" style="left:3017.80px;top:2361.47px;font-size:27.50px;line-height:27.50px;color:#0b5cb0;letter-spacing:0.386px;">@gmail.com</div>
<div class="t" style="left:2740.80px;top:2417.27px;font-size:27.50px;line-height:27.50px;color:#181818;letter-spacing:-0.410px;">Address</div>
<div class="t" style="left:2886.94px;top:2411.67px;font-size:27.50px;line-height:27.50px;color:#181818;letter-spacing:-0.200px;">17 Street Name,</div>
<div class="t" style="left:2887.76px;top:2451.17px;font-size:27.50px;line-height:27.50px;color:#181818;letter-spacing:0.054px;">Suburb,</div>
<div class="t" style="left:2887.62px;top:2491.27px;font-size:27.50px;line-height:27.50px;color:#181818;letter-spacing:-0.197px;">City, Postcode</div>
<div class="a" style="left:2622.00px;top:2535.50px;width:928.00px;height:2.00px;background:#dddddd;"></div>
<div class="a" style="left:2890.00px;top:2277.00px;width:7.00px;height:2.00px;background:#5b8fd0;"></div>
<div class="t" style="left:3037.26px;top:2569.97px;font-size:27.50px;line-height:27.50px;color:#0b6fce;letter-spacing:0.404px;">View All</div>
</body></html>
